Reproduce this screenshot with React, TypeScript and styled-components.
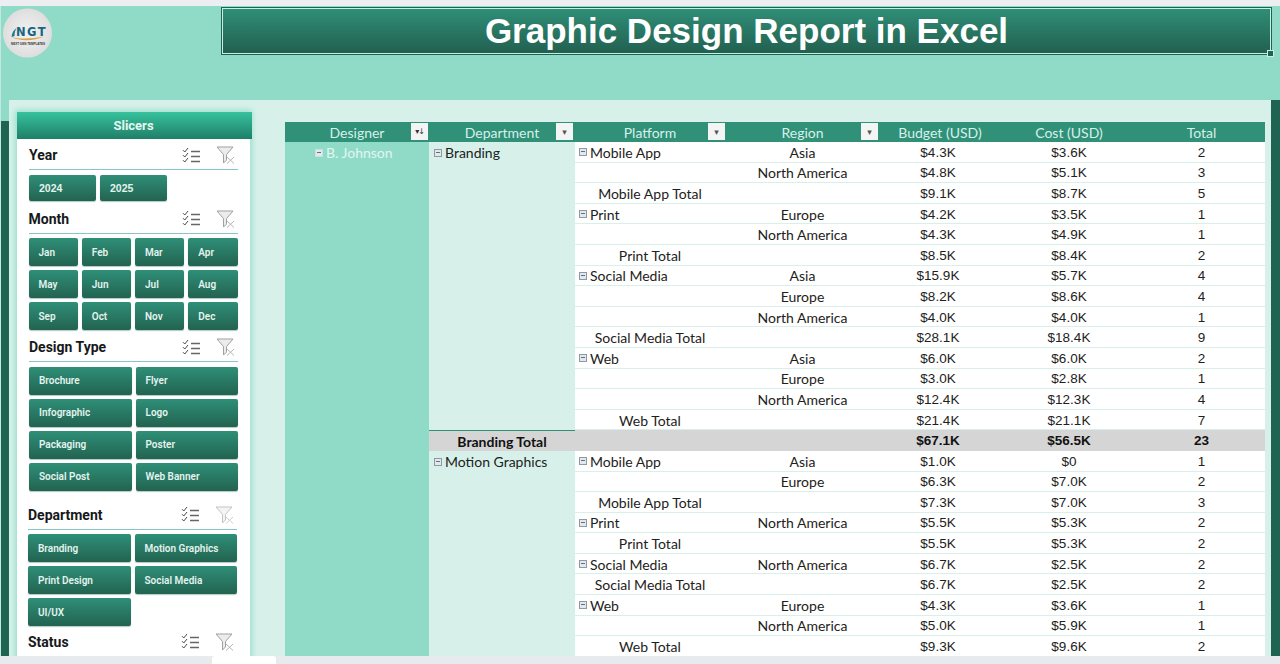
import styled, { createGlobalStyle } from 'styled-components';

const GlobalStyle = createGlobalStyle`
  html, body {
    margin: 0;
    padding: 0;
    background: #90dbc8;
  }
`;

type Row = {
  platform?: string;
  region?: string;
  budget: string;
  cost: string;
  total: number;
  subtotal?: string;
};

const BRANDING_ROWS: Row[] = [
  { platform: 'Mobile App', region: 'Asia', budget: '$4.3K', cost: '$3.6K', total: 2 },
  { region: 'North America', budget: '$4.8K', cost: '$5.1K', total: 3 },
  { subtotal: 'Mobile App Total', budget: '$9.1K', cost: '$8.7K', total: 5 },
  { platform: 'Print', region: 'Europe', budget: '$4.2K', cost: '$3.5K', total: 1 },
  { region: 'North America', budget: '$4.3K', cost: '$4.9K', total: 1 },
  { subtotal: 'Print Total', budget: '$8.5K', cost: '$8.4K', total: 2 },
  { platform: 'Social Media', region: 'Asia', budget: '$15.9K', cost: '$5.7K', total: 4 },
  { region: 'Europe', budget: '$8.2K', cost: '$8.6K', total: 4 },
  { region: 'North America', budget: '$4.0K', cost: '$4.0K', total: 1 },
  { subtotal: 'Social Media Total', budget: '$28.1K', cost: '$18.4K', total: 9 },
  { platform: 'Web', region: 'Asia', budget: '$6.0K', cost: '$6.0K', total: 2 },
  { region: 'Europe', budget: '$3.0K', cost: '$2.8K', total: 1 },
  { region: 'North America', budget: '$12.4K', cost: '$12.3K', total: 4 },
  { subtotal: 'Web Total', budget: '$21.4K', cost: '$21.1K', total: 7 },
];

const MOTION_ROWS: Row[] = [
  { platform: 'Mobile App', region: 'Asia', budget: '$1.0K', cost: '$0', total: 1 },
  { region: 'Europe', budget: '$6.3K', cost: '$7.0K', total: 2 },
  { subtotal: 'Mobile App Total', budget: '$7.3K', cost: '$7.0K', total: 3 },
  { platform: 'Print', region: 'North America', budget: '$5.5K', cost: '$5.3K', total: 2 },
  { subtotal: 'Print Total', budget: '$5.5K', cost: '$5.3K', total: 2 },
  { platform: 'Social Media', region: 'North America', budget: '$6.7K', cost: '$2.5K', total: 2 },
  { subtotal: 'Social Media Total', budget: '$6.7K', cost: '$2.5K', total: 2 },
  { platform: 'Web', region: 'Europe', budget: '$4.3K', cost: '$3.6K', total: 1 },
  { region: 'North America', budget: '$5.0K', cost: '$5.9K', total: 1 },
  { subtotal: 'Web Total', budget: '$9.3K', cost: '$9.6K', total: 2 },
];

const MONTHS = ['Jan', 'Feb', 'Mar', 'Apr', 'May', 'Jun', 'Jul', 'Aug', 'Sep', 'Oct', 'Nov', 'Dec'];
const DESIGN_TYPES = ['Brochure', 'Flyer', 'Infographic', 'Logo', 'Packaging', 'Poster', 'Social Post', 'Web Banner'];
const DEPARTMENTS = ['Branding', 'Motion Graphics', 'Print Design', 'Social Media', 'UI/UX'];

const ChecklistIcon = () => (
  <svg width="19" height="17" viewBox="0 0 19 17" fill="none">
    <path d="M1 3.2 L2.8 5 L6 1" stroke="#4a4a4a" strokeWidth="1" />
    <path d="M1 8.2 L2.8 10 L6 6" stroke="#4a4a4a" strokeWidth="1" />
    <path d="M1 13.2 L2.8 15 L6 11" stroke="#4a4a4a" strokeWidth="1" />
    <path d="M9 4.5 H18 M9 9.5 H18 M9 14.5 H18" stroke="#666" strokeWidth="1.3" />
  </svg>
);

const ClearFilterIcon = ({ faded }: { faded?: boolean }) => (
  <svg width="19" height="18" viewBox="0 0 19 18" fill="none">
    <path
      d="M1 1 H17 L10.5 8.5 V14 L7.5 17 V8.5 Z"
      stroke={faded ? '#c4c4c4' : '#a0a0a0'}
      fill={faded ? '#f4f4f4' : '#ececec'}
      strokeWidth="1"
    />
    <path d="M11 11 L18 17.5 M18 11 L11 17.5" stroke={faded ? '#cfcfcf' : '#b5b5b5'} strokeWidth="1" />
  </svg>
);

const LogoMark = () => (
  <svg width="50" height="50" viewBox="0 0 50 50">
    <defs>
      <radialGradient id="logoFill" cx="50%" cy="50%" r="55%">
        <stop offset="0%" stopColor="#f2f2f2" />
        <stop offset="100%" stopColor="#dcdcdc" />
      </radialGradient>
    </defs>
    <circle cx="24.5" cy="25" r="24.5" fill="url(#logoFill)" />
    <path d="M8.5 29 C9 25 10.5 22 13.5 20 C12 23 11.5 25 11.5 28 Z" fill="#1c7a8c" />
    <path d="M8.5 29 C18 31.5 30 30.5 41 28.5 C31 33 17 33.5 8.5 29 Z" fill="#d9a54a" />
    <text x="13" y="27.5" fontFamily="DejaVu Sans, sans-serif" fontWeight="700" fontSize="11.5" letterSpacing="1.5" fill="#17657f">
      NGT
    </text>
    <text x="8" y="36.5" fontFamily="Liberation Sans, sans-serif" fontWeight="700" fontSize="3" fill="#333">
      NEXT GEN TEMPLATES
    </text>
  </svg>
);

const SlicerSection = ({
  title,
  items,
  cols,
  rowHeight,
  titleHeight,
  shift = 0,
  faded,
  plainFont,
}: {
  title: string;
  items: string[];
  cols: number;
  rowHeight: number;
  titleHeight: number;
  shift?: number;
  faded?: boolean;
  plainFont?: boolean;
}) => (
  <SectionWrap $shift={shift}>
    <TitleRow $height={titleHeight}>
      <SectionTitle>{title}</SectionTitle>
      <IconGroup>
        <ChecklistIcon />
        <ClearFilterIcon faded={faded} />
      </IconGroup>
    </TitleRow>
    {items.length > 0 && (
      <ButtonGrid $cols={cols} $rowHeight={rowHeight}>
        {items.map((item) => (
          <SlicerButton key={item} $plainFont={plainFont}>
            {item}
          </SlicerButton>
        ))}
      </ButtonGrid>
    )}
  </SectionWrap>
);

const DataRows = ({ rows }: { rows: Row[] }) => (
  <>
    {rows.map((row, i) => (
      <RowCells key={i} row={row} />
    ))}
  </>
);

const RowCells = ({ row }: { row: Row }) => (
  <>
    {row.subtotal ? (
      <Cell $align="center">{row.subtotal}</Cell>
    ) : (
      <Cell $align="left">
        {row.platform && (
          <>
            <ExpandBox />
            {row.platform}
          </>
        )}
      </Cell>
    )}
    <Cell $align="center">{row.region}</Cell>
    <Cell $align="center" $numeric $nudge={-2}>
      {row.budget}
    </Cell>
    <Cell $align="center" $numeric>
      {row.cost}
    </Cell>
    <Cell $align="center" $numeric>
      {row.total}
    </Cell>
  </>
);

export default function App() {
  return (
    <>
      <GlobalStyle />
      <Page>
        <TopStrip />
        <Sheet>
          <Hero>
            <Logo>
              <LogoMark />
            </Logo>
            <Banner>
              <BannerTitle>Graphic Design Report in Excel</BannerTitle>
              <ResizeHandle />
            </Banner>
          </Hero>
          <Body>
            <Rail $top={21} $width={8} />
            <Panel>
              <Sidebar>
                <SidebarHeader>Slicers</SidebarHeader>
                <SlicerSection title="Year" items={['2024', '2025']} cols={3} rowHeight={26} titleHeight={31} plainFont />
                <SlicerSection title="Month" items={MONTHS} cols={4} rowHeight={28} titleHeight={33} shift={-0.5} />
                <SlicerSection title="Design Type" items={DESIGN_TYPES} cols={2} rowHeight={28} titleHeight={32} />
                <SlicerSection title="Department" items={DEPARTMENTS} cols={2} rowHeight={28} titleHeight={39} shift={-1} faded />
                <SlicerSection title="Status" items={[]} cols={2} rowHeight={28} titleHeight={30.5} shift={-1} />
              </Sidebar>
              <Pivot>
                <HeaderCell>
                  Designer
                  <FilterButton $right={1}>
                    <SortGlyph>▾↓</SortGlyph>
                  </FilterButton>
                </HeaderCell>
                <HeaderCell>
                  Department
                  <FilterButton $right={2}>▾</FilterButton>
                </HeaderCell>
                <HeaderCell>
                  Platform
                  <FilterButton $right={0}>▾</FilterButton>
                </HeaderCell>
                <HeaderCell>
                  Region
                  <FilterButton $right={2}>▾</FilterButton>
                </HeaderCell>
                <HeaderCell>Budget (USD)</HeaderCell>
                <HeaderCell>Cost (USD)</HeaderCell>
                <HeaderCell>Total</HeaderCell>

                <DesignerCell>
                  <ExpandBox $light />
                  B. Johnson
                </DesignerCell>

                <DepartmentCell $span={14}>
                  <ExpandBox />
                  Branding
                </DepartmentCell>
                <DataRows rows={BRANDING_ROWS} />

                <TotalLabel>Branding Total</TotalLabel>
                <TotalCell />
                <TotalCell />
                <TotalCell $nudge={-2}>$67.1K</TotalCell>
                <TotalCell>$56.5K</TotalCell>
                <TotalCell>23</TotalCell>

                <DepartmentCell $span={10}>
                  <ExpandBox />
                  Motion Graphics
                </DepartmentCell>
                <DataRows rows={MOTION_ROWS} />
              </Pivot>
            </Panel>
            <Rail $top={0} $width={9} />
          </Body>
        </Sheet>
        <TabBar>
          <ActiveTab />
        </TabBar>
      </Page>
    </>
  );
}

const Page = styled.div`
  width: 1280px;
  height: 664px;
  display: flex;
  flex-direction: column;
  overflow: hidden;
  background: #90dbc8;
`;

const TopStrip = styled.div`
  height: 6px;
  flex: none;
  background: #eceef2;
`;

const Sheet = styled.div`
  flex: 1;
  min-height: 0;
  display: flex;
  flex-direction: column;
  border-left: 1px solid #c3e9de;
`;

const Hero = styled.div`
  height: 94px;
  flex: none;
  display: flex;
  align-items: flex-start;
  padding: 1px 0 0 2px;
  box-sizing: border-box;
`;

const Logo = styled.div`
  width: 50px;
  height: 50px;
  margin-top: 1px;
  flex: none;
`;

const Banner = styled.div`
  position: relative;
  width: 1051px;
  height: 48px;
  margin-left: 168px;
  box-sizing: border-box;
  display: flex;
  align-items: center;
  justify-content: center;
  background: linear-gradient(#2f8f78, #225f4f);
  border: 1px solid #1f6352;
  box-shadow: inset 0 0 0 1px #c9efe3;
`;

const BannerTitle = styled.h1`
  margin: 0 0 1px;
  font-family: 'Liberation Sans', Arial, sans-serif;
  font-size: 35px;
  font-weight: 700;
  color: #ffffff;
`;

const ResizeHandle = styled.span`
  position: absolute;
  right: -3px;
  bottom: -3px;
  width: 5px;
  height: 5px;
  background: #1f6352;
  border: 1px solid #c9efe3;
`;

const Body = styled.div`
  flex: 1;
  min-height: 0;
  display: flex;
`;

const Rail = styled.div<{ $top: number; $width: number }>`
  flex: none;
  width: ${(p) => p.$width}px;
  margin-top: ${(p) => p.$top}px;
  background: #1f6352;
`;

const Panel = styled.div`
  flex: 1;
  min-width: 0;
  display: flex;
  align-items: flex-start;
  gap: 35px;
  padding: 12px 0 0 8px;
  background: #d7f1ea;
`;

const Sidebar = styled.aside`
  width: 233px;
  flex: none;
  height: 600px;
  background: #ffffff;
  box-shadow: 0 0 6px 2px #9adfcc;
`;

const SidebarHeader = styled.div`
  width: 235px;
  height: 27px;
  box-sizing: border-box;
  padding-right: 2px;
  display: flex;
  align-items: center;
  justify-content: center;
  font-family: Roboto, sans-serif;
  font-size: 13px;
  font-weight: 700;
  color: #e6f7f2;
  background: linear-gradient(#36c29d, #1f7f68);
`;

const SectionWrap = styled.section<{ $shift: number }>`
  width: 209px;
  margin-left: ${(p) => 12 + p.$shift}px;
`;

const TitleRow = styled.div<{ $height: number }>`
  height: ${(p) => p.$height}px;
  box-sizing: border-box;
  display: flex;
  align-items: flex-end;
  justify-content: space-between;
  padding: 0 3px 4px 0;
  border-bottom: 1px solid #86c5cc;
`;

const SectionTitle = styled.h3`
  margin: 0;
  font-family: Roboto, sans-serif;
  font-size: 14px;
  line-height: 20px;
  font-weight: 700;
  color: #16191a;
`;

const IconGroup = styled.div`
  display: flex;
  align-items: center;
  gap: 15px;
  height: 20px;
`;

const ButtonGrid = styled.div<{ $cols: number; $rowHeight: number }>`
  display: grid;
  grid-template-columns: repeat(${(p) => p.$cols}, 1fr);
  grid-auto-rows: ${(p) => p.$rowHeight}px;
  gap: 4px;
  margin-top: 4.5px;
`;

const SlicerButton = styled.div<{ $plainFont?: boolean }>`
  display: flex;
  align-items: center;
  padding-left: 10px;
  border-radius: 2px;
  font-family: ${(p) => (p.$plainFont ? "'Liberation Sans', Arial, sans-serif" : 'Roboto, sans-serif')};
  font-size: ${(p) => (p.$plainFont ? 10.5 : 10)}px;
  font-weight: ${(p) => (p.$plainFont ? 700 : 600)};
  color: #e3f3ee;
  background: linear-gradient(#2f8f78, #226350);
  box-shadow: 0 1px 1px rgba(31, 99, 82, 0.35);
`;

const Pivot = styled.div`
  width: 980px;
  flex: none;
  margin-top: 10px;
  display: grid;
  grid-template-columns: 144px 146px 150px 155px 120px 138px 127px;
  grid-template-rows: 20px;
  grid-auto-rows: 20.6px;
  font-family: Lato, sans-serif;
  font-size: 14px;
  color: #1d2220;
`;

const HeaderCell = styled.div`
  position: relative;
  display: flex;
  align-items: center;
  justify-content: center;
  background: #309078;
  color: #d7f1ea;
`;

const FilterButton = styled.span<{ $right: number }>`
  position: absolute;
  top: 1px;
  right: ${(p) => p.$right}px;
  width: 17px;
  height: 17px;
  display: flex;
  align-items: center;
  justify-content: center;
  font-family: 'DejaVu Sans', sans-serif;
  font-size: 9px;
  color: #555;
  background: #f3f5f4;
`;

const SortGlyph = styled.span`
  font-size: 8px;
  letter-spacing: -1px;
  color: #333;
`;

const ExpandBox = styled.span<{ $light?: boolean }>`
  position: relative;
  display: inline-block;
  width: 8px;
  height: 8px;
  margin-right: 3px;
  box-sizing: border-box;
  border: 1px solid ${(p) => (p.$light ? '#c9dfe0' : '#8d9aa3')};
  background: #e3e8ee;
  vertical-align: 1px;

  &::after {
    content: '';
    position: absolute;
    left: 1px;
    right: 1px;
    top: 2px;
    height: 1px;
    background: #65707a;
  }
`;

const DesignerCell = styled.div`
  grid-column: 1;
  grid-row: 2 / span 26;
  background: #90dbc8;
  color: #e2f5ef;
  padding: 1px 0 0 30px;
  line-height: 19px;
`;

const DepartmentCell = styled.div<{ $span: number }>`
  grid-column: 2;
  grid-row: span ${(p) => p.$span};
  background: #d7f1ea;
  padding: 1px 0 0 5px;
  line-height: 19px;
`;

const Cell = styled.div<{ $align: 'left' | 'center'; $numeric?: boolean; $nudge?: number }>`
  background: #ffffff;
  border-bottom: 1px solid #d7f1ea;
  box-sizing: border-box;
  display: flex;
  align-items: center;
  justify-content: ${(p) => (p.$align === 'left' ? 'flex-start' : 'center')};
  padding-top: 1px;
  padding-left: ${(p) => (p.$align === 'left' ? 4 : 0)}px;
  padding-right: ${(p) => (p.$nudge ? -p.$nudge * 2 : 0)}px;
  font-family: ${(p) => (p.$numeric ? "'Liberation Sans', Arial, sans-serif" : 'inherit')};
  font-size: ${(p) => (p.$numeric ? 13.5 : 14)}px;
`;

const TotalLabel = styled.div`
  display: flex;
  align-items: center;
  justify-content: center;
  background: #d5d5d5;
  border-top: 1px solid #309078;
  box-sizing: border-box;
  font-weight: 700;
  color: #111;
`;

const TotalCell = styled.div<{ $nudge?: number }>`
  display: flex;
  align-items: center;
  justify-content: center;
  padding-right: ${(p) => (p.$nudge ? -p.$nudge * 2 : 0)}px;
  background: #d5d5d5;
  font-family: 'Liberation Sans', Arial, sans-serif;
  font-size: 13.5px;
  font-weight: 700;
  color: #111;
`;

const TabBar = styled.div`
  height: 8px;
  flex: none;
  padding-left: 212px;
  background: #e8ebee;
`;

const ActiveTab = styled.div`
  width: 64px;
  height: 8px;
  background: #ffffff;
  border-radius: 3px 3px 0 0;
`;
